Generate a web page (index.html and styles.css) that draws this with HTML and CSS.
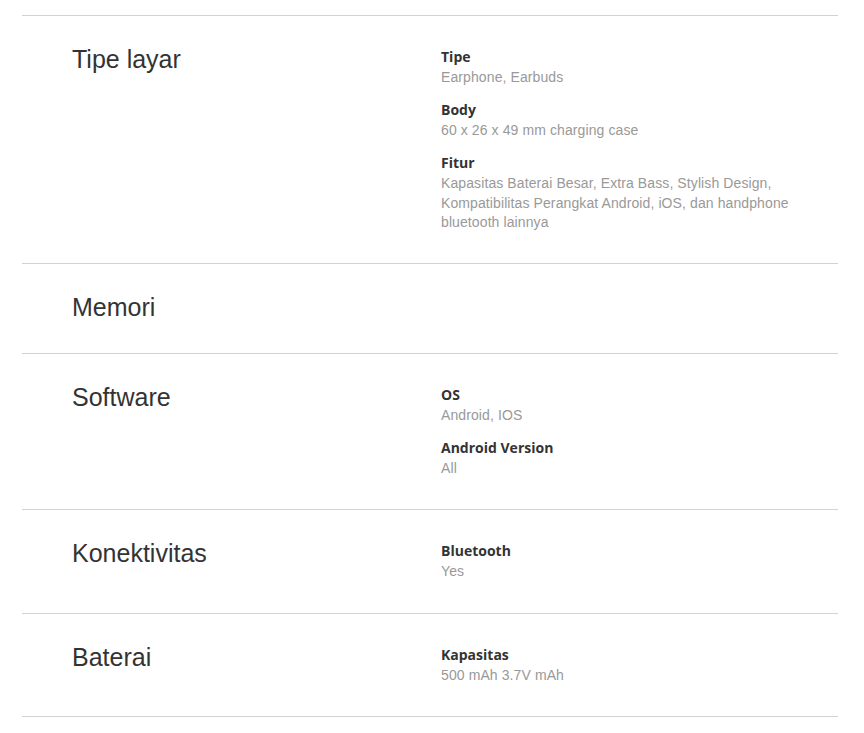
FILE: index.html
```html
<!DOCTYPE html>
<html lang="id">
<head>
<meta charset="utf-8">
<title>Spesifikasi</title>
<link rel="stylesheet" href="styles.css">
</head>
<body>
<div class="specs">
  <section class="spec">
    <h2 class="spec-title">Tipe layar</h2>
    <dl class="spec-list">
      <div class="item"><dt>Tipe</dt><dd>Earphone, Earbuds</dd></div>
      <div class="item"><dt>Body</dt><dd>60 x 26 x 49 mm charging case</dd></div>
      <div class="item"><dt>Fitur</dt><dd>Kapasitas Baterai Besar, Extra Bass, Stylish Design, Kompatibilitas Perangkat Android, iOS, dan handphone bluetooth lainnya</dd></div>
    </dl>
  </section>
  <section class="spec">
    <h2 class="spec-title">Memori</h2>
    <dl class="spec-list"></dl>
  </section>
  <section class="spec">
    <h2 class="spec-title">Software</h2>
    <dl class="spec-list">
      <div class="item"><dt>OS</dt><dd>Android, IOS</dd></div>
      <div class="item"><dt>Android Version</dt><dd>All</dd></div>
    </dl>
  </section>
  <section class="spec">
    <h2 class="spec-title">Konektivitas</h2>
    <dl class="spec-list">
      <div class="item"><dt>Bluetooth</dt><dd>Yes</dd></div>
    </dl>
  </section>
  <section class="spec">
    <h2 class="spec-title">Baterai</h2>
    <dl class="spec-list">
      <div class="item"><dt>Kapasitas</dt><dd>500 mAh 3.7V mAh</dd></div>
    </dl>
  </section>
</div>
</body>
</html>
```
FILE: styles.css
```css
html, body {
  margin: 0;
  padding: 0;
  background: #fff;
}
body {
  font-family: "Liberation Sans", Arial, sans-serif;
  color: #333;
}
.specs {
  margin: 15px 26px 0 22px;
  border-top: 1px solid #d2d2d2;
}
.spec {
  display: grid;
  grid-template-columns: 369px 1fr;
  padding: 28px 30px 30.8px 50px;
  border-bottom: 1px solid #d2d2d2;
}
.spec-title {
  margin: 0;
  font-size: 25px;
  line-height: 30px;
  font-weight: 400;
  color: #333;
}
.spec-list {
  margin: 0;
  padding-top: 3px;
}
.item + .item {
  margin-top: 12.5px;
}
.item dt {
  margin-bottom: 2px;
  font-family: "Open Sans", "DejaVu Sans", sans-serif;
  font-weight: 700;
  font-size: 14px;
  line-height: 19px;
  color: #333;
}
.item dd {
  margin: 0;
  font-size: 14px;
  line-height: 19.5px;
  letter-spacing: 0.1px;
  color: #999;
}
```
